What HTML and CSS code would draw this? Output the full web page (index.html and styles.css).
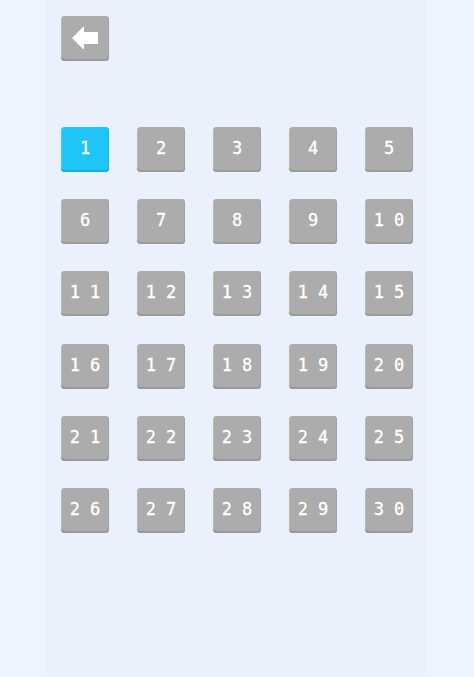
FILE: index.html
```html
<!DOCTYPE html>
<html lang="en">
<head>
    <meta charset="UTF-8" />
    <meta name="viewport" content="width=device-width, initial-scale=1.0" />
    <title>Levels</title>
    <link rel="stylesheet" href="styles.css">
</head>
<body>
    <div class="panel">
        <button class="tile back-button" aria-label="Back">
            <svg width="26" height="22" viewBox="0 0 26 22">
                <path d="M0 11 L10 1 L11 0 H12 V5 H26 V17 H12 V22 H11 L10 21 Z" fill="#fff"/>
            </svg>
        </button>

        <div class="level-grid">
            <button class="tile level active">1</button>
            <button class="tile level">2</button>
            <button class="tile level">3</button>
            <button class="tile level">4</button>
            <button class="tile level">5</button>
            <button class="tile level">6</button>
            <button class="tile level">7</button>
            <button class="tile level">8</button>
            <button class="tile level">9</button>
            <button class="tile level">10</button>
            <button class="tile level">11</button>
            <button class="tile level">12</button>
            <button class="tile level">13</button>
            <button class="tile level">14</button>
            <button class="tile level">15</button>
            <button class="tile level">16</button>
            <button class="tile level">17</button>
            <button class="tile level">18</button>
            <button class="tile level">19</button>
            <button class="tile level">20</button>
            <button class="tile level">21</button>
            <button class="tile level">22</button>
            <button class="tile level">23</button>
            <button class="tile level">24</button>
            <button class="tile level">25</button>
            <button class="tile level">26</button>
            <button class="tile level">27</button>
            <button class="tile level">28</button>
            <button class="tile level">29</button>
            <button class="tile level">30</button>
        </div>
    </div>
</body>
</html>
```

FILE: styles.css
```css
* {
    box-sizing: border-box;
    margin: 0;
    padding: 0;
}

body {
    font-family: "DejaVu Sans Mono", monospace;
    background: #eef4fe;
    height: 677px;
    overflow: hidden;
}

.panel {
    width: 380px;
    height: 675px;
    margin-left: 46px;
    padding: 16px 0 0 15px;
    background: #eaf1fd;
}

.tile {
    width: 48px;
    height: 45px;
    border: none;
    border-radius: 4px;
    background: #acacac;
    box-shadow: inset 0 -2px 0 #9a9a9a, inset 1px 0 0 #b6b6b6, inset -1px 0 0 #a0a0a0;
    color: #fff;
    font-family: inherit;
    cursor: pointer;
    display: flex;
    align-items: center;
    justify-content: center;
}

.back-button {
    padding-bottom: 1px;
}

.level-grid {
    margin-top: 66px;
    display: grid;
    grid-template-columns: repeat(5, 48px);
    grid-auto-rows: 45px;
    column-gap: 28px;
    row-gap: 27.2px;
}

.level {
    font-size: 17px;
    letter-spacing: 10px;
    -webkit-text-stroke: 0.3px #fff;
    padding: 0 0 3px 10px;
}

.level.active {
    background: #1ec6f7;
    box-shadow: inset 0 -2px 0 #11aee0, inset 1px 0 0 #3fd0f8, inset -1px 0 0 #18b8ea;
}
```
